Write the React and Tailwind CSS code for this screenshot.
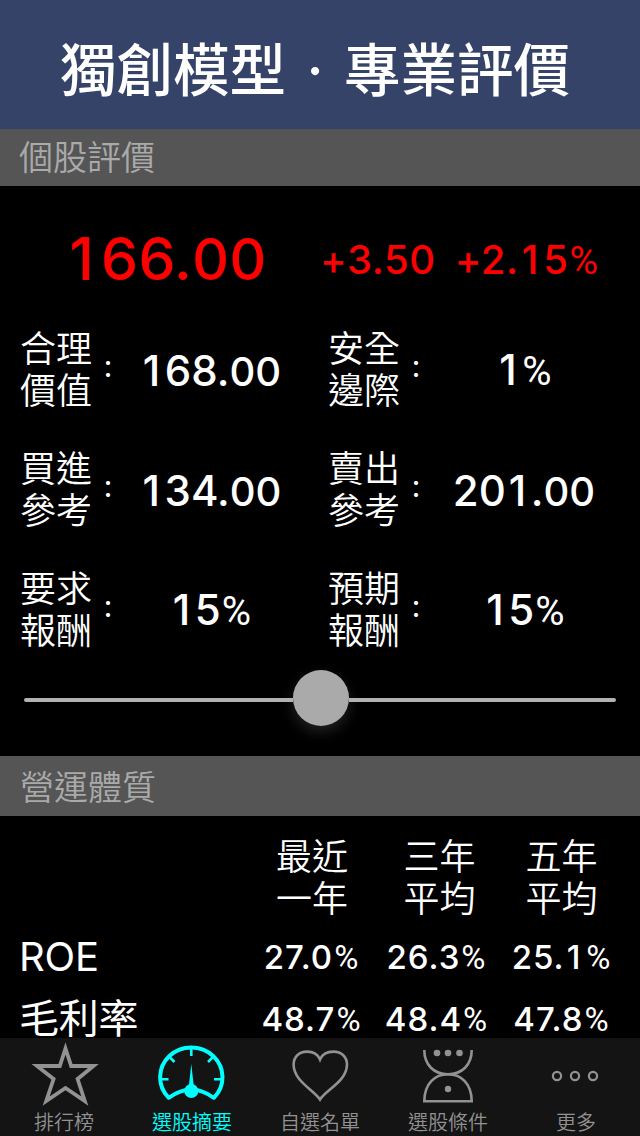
const quote = { whole: "166.", decimal: "00", change: "+3.50", percent: "+2.15" };

const valuations = [
  { label: ["合理", "價值"], whole: "168.", decimal: "00" },
  { label: ["安全", "邊際"], whole: "1", unit: "%" },
  { label: ["買進", "參考"], whole: "134.", decimal: "00" },
  { label: ["賣出", "參考"], whole: "201.", decimal: "00" },
  { label: ["要求", "報酬"], whole: "15", unit: "%" },
  { label: ["預期", "報酬"], whole: "15", unit: "%" },
];

const periods = [
  ["最近", "一年"],
  ["三年", "平均"],
  ["五年", "平均"],
];

const metrics = [
  { name: "ROE", values: ["27.0", "26.3", "25.1"] },
  { name: "毛利率", values: ["48.7", "48.4", "47.8"] },
];

const StarIcon = () => (
  <svg className="overflow-visible" width="72" height="66" viewBox="0 0 72 66" fill="none" stroke="currentColor" strokeWidth="3.8" strokeMiterlimit="10">
    <path d="M37.5 10.5 L43.2 28 H65.5 L49.6 41 L56.8 63 L37.5 50 L18.2 63 L25.6 41 L9 28 H31.8 Z" />
  </svg>
);

const GaugeIcon = () => (
  <svg width="72" height="66" viewBox="0 0 72 66" fill="none" stroke="currentColor" strokeWidth="4">
    <path d="M12.7 59.8 A31.2 29.8 0 1 1 57.9 59.8 Q46 51.5 35.3 51.5 Q24.5 51.5 12.7 59.8 Z" strokeLinejoin="round" />
    <path d="M35.3 10 V18 M14 19.5 L18.5 24 M56.5 19.5 L52 24 M4 41.2 H12.5 M66.5 41.2 H58" strokeWidth="2.6" />
    <circle cx="35.3" cy="53" r="7" fill="currentColor" stroke="none" />
    <path d="M35.3 26 L38 50 H32.6 Z" fill="currentColor" stroke="none" />
  </svg>
);

const HeartIcon = () => (
  <svg width="72" height="66" viewBox="0 0 72 66" fill="none" stroke="currentColor" strokeWidth="2.6">
    <path d="M36 61.5 C30 52 9.6 43 9.6 26.5 C9.6 19 15 13.6 23 13.6 C29 13.6 34 16.5 36 21.5 C38 16.5 43 13.6 49.5 13.6 C57.5 13.6 63 19 63 26.5 C63 43 42 52 36 61.5 Z" />
  </svg>
);

const FilterIcon = () => (
  <svg width="72" height="66" viewBox="0 0 72 66" fill="none" stroke="currentColor" strokeWidth="2.6">
    <path d="M12.3 12 C12.3 27 22 36.2 36 36.2 C50 36.2 59.7 27 59.7 12" />
    <path d="M12.3 63.2 C12.3 45.5 23 36.2 36 36.2 C49 36.2 59.7 45.5 59.7 63.2 Z" />
    <g fill="currentColor" stroke="none">
      <circle cx="25" cy="15" r="3.3" />
      <circle cx="36" cy="15" r="3.3" />
      <circle cx="47.5" cy="15" r="3.3" />
      <circle cx="36" cy="51" r="3.2" />
    </g>
  </svg>
);

const MoreIcon = () => (
  <svg width="72" height="66" viewBox="0 0 72 66" fill="none" stroke="currentColor" strokeWidth="2.2">
    <circle cx="17" cy="38" r="4.1" />
    <circle cx="35" cy="38" r="4.1" />
    <circle cx="53" cy="38" r="4.1" />
  </svg>
);

const tabs = [
  { label: "排行榜", icon: StarIcon },
  { label: "選股摘要", icon: GaugeIcon, active: true },
  { label: "自選名單", icon: HeartIcon },
  { label: "選股條件", icon: FilterIcon },
  { label: "更多", icon: MoreIcon },
];

// the proportional "1" is narrower than the other digits, pad it to keep columns even
const Digits = ({ children }) =>
  children.split(/(1)/).map((part, i) =>
    part === "1" ? (
      <span key={i} className="pr-[0.11em] pl-[0.07em]">
        1
      </span>
    ) : (
      part
    )
  );

const Percent = ({ className }) => (
  <span className={`pl-px font-['Roboto',sans-serif] font-[450] ${className}`}>%</span>
);

const Stacked = ({ lines, className = "" }) => (
  <div className={`text-[36px] leading-[42px] font-[350] ${className}`}>
    {lines.map((line) => (
      <div key={line}>{line}</div>
    ))}
  </div>
);

const Valuation = ({ label, whole, decimal, unit }) => (
  <div className="group flex h-[120px] items-center">
    <Stacked lines={label} className="w-[72px]" />
    <span className="w-8 text-center text-[24px] leading-none font-medium">：</span>
    <div className="flex flex-1 items-baseline justify-center pt-px pr-[31px] text-[42px] leading-none font-[450] group-even:pr-6">
      <span>
        <Digits>{whole}</Digits>
      </span>
      {decimal && <span className="text-[40px]">{decimal}</span>}
      {unit && <Percent className="text-[40px]" />}
    </div>
  </div>
);

export default function App() {
  return (
    <div
      lang="zh-Hant"
      className="flex h-[1136px] w-[640px] flex-col overflow-hidden bg-black font-['Inter','Noto_Sans_CJK_TC',sans-serif] text-white"
    >
      <header className="flex h-[129px] shrink-0 items-center bg-[#364368] pt-[13px] pl-[60px] text-[56.5px] leading-none font-medium">
        <span>獨創模型</span>
        <span className="w-[58px] text-center">·</span>
        <span>專業評價</span>
      </header>

      <h2 className="flex h-[57px] shrink-0 items-center bg-[#555] pt-px pl-[19px] text-[34px] leading-none font-[350] text-[#aaa]">
        個股評價
      </h2>

      <section className="h-[570px] shrink-0">
        <div className="flex h-[124px] items-center pt-5 leading-none font-[450] text-[#f00]">
          <div className="flex w-[320px] items-baseline justify-center pl-3 text-[59px] tracking-[0.006em]">
            <span>
              <Digits>{quote.whole}</Digits>
            </span>
            <span className="text-[57px]">{quote.decimal}</span>
          </div>
          <div className="flex items-baseline gap-[19px] pt-1 text-[40px] tracking-[0.015em]">
            <span>{quote.change}</span>
            <span>
              <Digits>{quote.percent}</Digits>
              <Percent className="text-[39px]" />
            </span>
          </div>
        </div>

        <div className="grid grid-cols-[308px_312px] pl-5">
          {valuations.map((item) => (
            <Valuation key={item.label.join("")} {...item} />
          ))}
        </div>

        <div className="flex h-[56px] items-center px-6">
          <div className="mt-1 h-1 w-[269px] rounded-l-full bg-[#b2b2b2]" />
          <div className="size-14 rounded-full bg-[#aaa] shadow-[0_6px_14px_rgba(170,170,170,0.2)]" />
          <div className="mt-1 h-1 flex-1 rounded-r-full bg-[#b2b2b2]" />
        </div>
      </section>

      <h2 className="flex h-[60px] shrink-0 items-center bg-[#555] pt-[3px] pl-[20px] text-[34px] leading-none font-[350] text-[#aaa]">
        營運體質
      </h2>

      <section className="min-h-0 flex-1 pt-5">
        <div className="grid grid-cols-[248px_128px_127px_117px]">
          <div />
          {periods.map((period) => (
            <Stacked key={period.join("")} lines={period} className="text-center" />
          ))}
        </div>
        <div className="pt-[6px]">
          {metrics.map(({ name, values }) => (
            <div key={name} className="grid h-[62px] grid-cols-[248px_126px_124px_126px] items-center">
              <div className="pl-[19px] text-[40px] leading-[34px] font-[370] tracking-[-0.005em]">{name}</div>
              {values.map((value) => (
                <div key={value} className="pl-px text-center text-[33px] leading-none font-[450] tracking-[0.03em]">
                  <Digits>{value}</Digits>
                  <Percent className="text-[33px]" />
                </div>
              ))}
            </div>
          ))}
        </div>
      </section>

      <nav className="grid h-[98px] shrink-0 grid-cols-5 bg-[#141414]">
        {tabs.map(({ label, icon: Icon, active }) => (
          <div
            key={label}
            className={`flex flex-col items-center ${active ? "text-[#0ff]" : "text-[#929292]"}`}
          >
            <Icon />
            <span className="pt-[9px] text-[20px] leading-5 font-[350]">{label}</span>
          </div>
        ))}
      </nav>
    </div>
  );
}
